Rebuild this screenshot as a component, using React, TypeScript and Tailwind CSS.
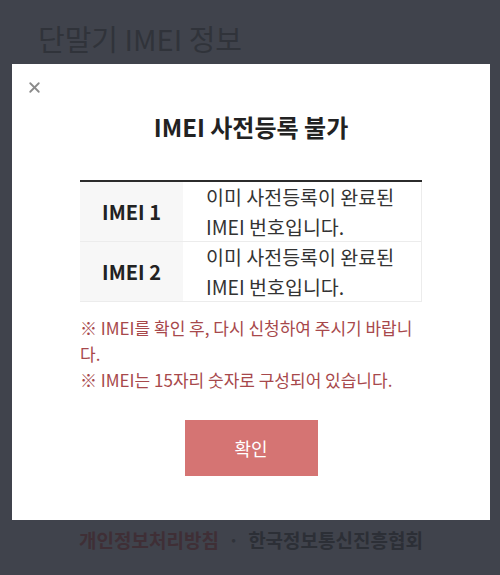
import { X } from "lucide-react";

const FONT = "font-['Noto_Sans_CJK_KR','Noto_Sans',sans-serif]";

const ROWS = [
  { label: "IMEI 1", message: ["이미 사전등록이 완료된", "IMEI 번호입니다."] },
  { label: "IMEI 2", message: ["이미 사전등록이 완료된", "IMEI 번호입니다."] },
];

function ResultTable() {
  return (
    <div className="mx-auto mt-[36px] w-[342px] border-t-2 border-[#2b2b2b]">
      {ROWS.map((row) => (
        <div key={row.label} className="flex h-[60px] border-b border-r border-[#ececec]">
          <div className="flex w-[103px] shrink-0 items-center justify-center bg-[#f7f7f7] text-[20px] font-bold text-[#222]">
            {row.label}
          </div>
          <div className="flex flex-col justify-center pl-[23px] text-[19.5px] leading-[30px] text-[#333]">
            {row.message.map((line) => (
              <span key={line}>{line}</span>
            ))}
          </div>
        </div>
      ))}
    </div>
  );
}

function ErrorModal() {
  return (
    <div className="fixed left-[12px] top-[64px] w-[478px] bg-white pt-[46px] pb-[44px]">
      <button className="absolute left-[14px] top-[15px] text-[#8a8a8a]" aria-label="닫기">
        <X size={17} strokeWidth={2.6} />
      </button>

      <h2 className="text-center text-[24px] font-bold leading-[34px] text-[#222]">
        IMEI 사전등록 불가
      </h2>

      <ResultTable />

      <div className="mx-auto mt-[13px] w-[342px] text-[17px] leading-[26px] text-[#a7484b]">
        <p>※ IMEI를 확인 후, 다시 신청하여 주시기 바랍니다.</p>
        <p>※ IMEI는 15자리 숫자로 구성되어 있습니다.</p>
      </div>

      <div className="mt-[27px] flex justify-center">
        <button className="h-[56px] w-[133px] bg-[#d57473] text-[18px] text-white">확인</button>
      </div>
    </div>
  );
}

export default function App() {
  return (
    <div className={`${FONT} relative h-[575px] w-[500px] overflow-hidden bg-[#40434c]`}>
      {/* page underneath the dimmed overlay */}
      <h1 className="pl-[38px] pt-[18px] text-[29px] leading-[40px] text-[#30333a]">단말기 IMEI 정보</h1>

      <div className="mt-[468px] flex items-center justify-center gap-[9px] pl-[2px] text-[19px] font-bold leading-[28px]">
        <span className="text-[#3f2f36]">개인정보처리방침</span>
        <span className="text-[#30333a]">·</span>
        <span className="text-[#2c2f36]">한국정보통신진흥협회</span>
      </div>

      <ErrorModal />
    </div>
  );
}
